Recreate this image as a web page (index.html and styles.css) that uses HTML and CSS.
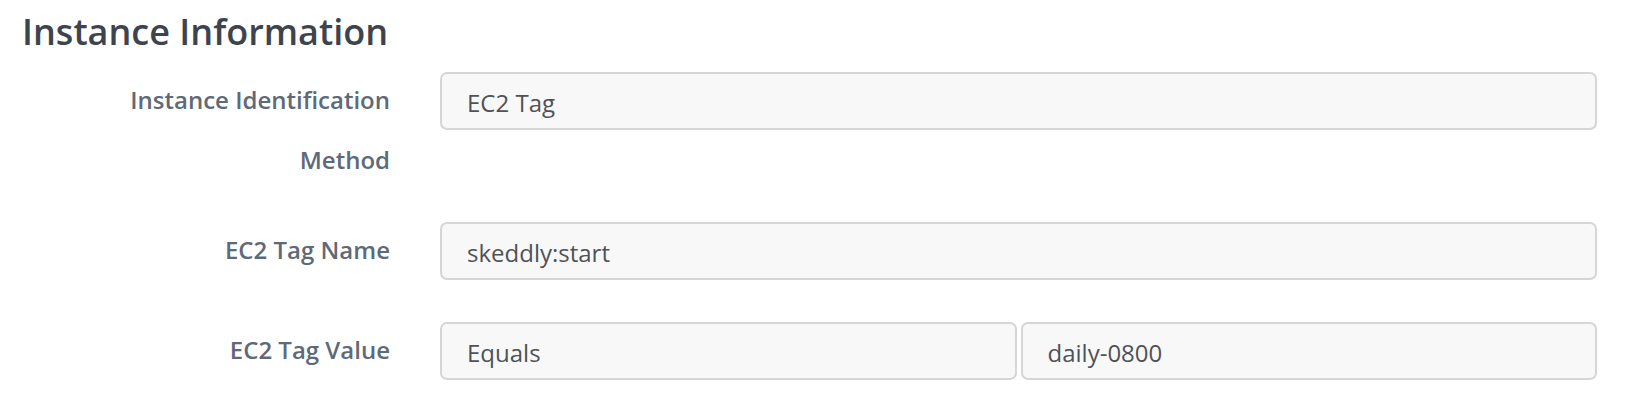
FILE: index.html
```html
<!DOCTYPE html>
<html>
<head>
<meta charset="utf-8">
<link rel="stylesheet" href="styles.css">
</head>
<body>
<div class="panel">
  <h2 class="title">Instance Information</h2>
  <div class="form-row form-row--tall">
    <label class="label">Instance Identification Method</label>
    <div class="controls"><div class="field">EC2 Tag</div></div>
  </div>
  <div class="form-row">
    <label class="label">EC2 Tag Name</label>
    <div class="controls"><div class="field">skeddly:start</div></div>
  </div>
  <div class="form-row">
    <label class="label">EC2 Tag Value</label>
    <div class="controls controls--split">
      <div class="field">Equals</div>
      <div class="field">daily-0800</div>
    </div>
  </div>
</div>
</body>
</html>
```
FILE: styles.css
```css
html, body {
  margin: 0;
  padding: 0;
  background: #ffffff;
}
body {
  font-family: "Open Sans", "Noto Sans", sans-serif;
}
.panel {
  padding: 10px 30px 0 22px;
}
.title {
  margin: 0 0 18px 0;
  font-size: 36px;
  font-weight: 600;
  line-height: 44px;
  color: #3d4450;
}
.form-row {
  display: grid;
  grid-template-columns: 368px 1fr;
  column-gap: 50px;
  align-items: start;
  margin-bottom: 42px;
}
.form-row--tall {
  margin-bottom: 32px;
}
.label {
  text-align: right;
  font-size: 24px;
  font-weight: 600;
  line-height: 60px;
  color: #5f6a78;
  margin-top: -2px;
  padding-left: 100px;
}
.controls {
  display: flex;
  gap: 4px;
}
.controls--split .field {
  flex: 1 1 0;
}
.field {
  flex: 1 1 auto;
  height: 50px;
  box-sizing: content-box;
  border: 2px solid #d6d6d6;
  border-radius: 7px;
  background: #f8f8f8;
  padding: 4px 25px 0 25px;
  font-size: 24px;
  line-height: 50px;
  color: #4f5257;
}
```
